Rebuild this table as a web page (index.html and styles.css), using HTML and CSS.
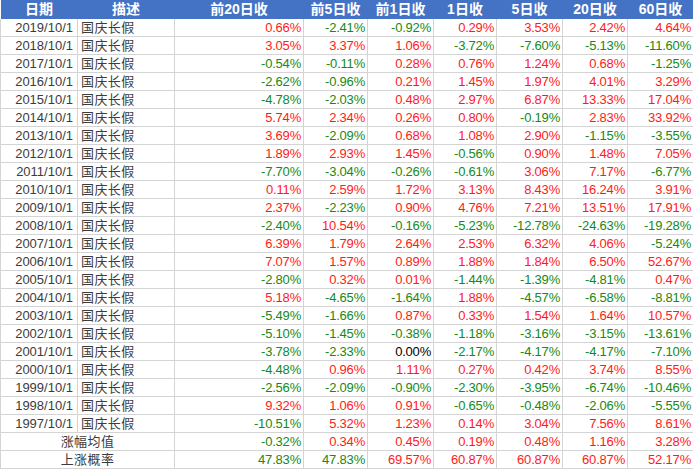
FILE: index.html
```html
<!DOCTYPE html>
<html lang="zh">
<head>
<meta charset="utf-8">
<title>国庆长假</title>
<link rel="stylesheet" href="styles.css">
</head>
<body>
<table class="tbl">
<colgroup>
<col class="c-date"><col class="c-desc"><col class="c-n20"><col class="c-n5"><col class="c-n1"><col class="c-d1"><col class="c-d5"><col class="c-d20"><col class="c-d60">
</colgroup>
<thead>
<tr><th>日期</th><th>描述</th><th>前20日收</th><th>前5日收</th><th>前1日收</th><th>1日收</th><th>5日收</th><th>20日收</th><th>60日收</th></tr>
</thead>
<tbody>
<tr class="first"><td class="date">2019/10/1</td><td class="desc">国庆长假</td><td class="up">0.66%</td><td class="dn">-2.41%</td><td class="dn">-0.92%</td><td class="up">0.29%</td><td class="up">3.53%</td><td class="up">2.42%</td><td class="up">4.64%</td></tr>
<tr><td class="date">2018/10/1</td><td class="desc">国庆长假</td><td class="up">3.05%</td><td class="up">3.37%</td><td class="up">1.06%</td><td class="dn">-3.72%</td><td class="dn">-7.60%</td><td class="dn">-5.13%</td><td class="dn">-11.60%</td></tr>
<tr><td class="date">2017/10/1</td><td class="desc">国庆长假</td><td class="dn">-0.54%</td><td class="dn">-0.11%</td><td class="up">0.28%</td><td class="up">0.76%</td><td class="up">1.24%</td><td class="up">0.68%</td><td class="dn">-1.25%</td></tr>
<tr><td class="date">2016/10/1</td><td class="desc">国庆长假</td><td class="dn">-2.62%</td><td class="dn">-0.96%</td><td class="up">0.21%</td><td class="up">1.45%</td><td class="up">1.97%</td><td class="up">4.01%</td><td class="up">3.29%</td></tr>
<tr><td class="date">2015/10/1</td><td class="desc">国庆长假</td><td class="dn">-4.78%</td><td class="dn">-2.03%</td><td class="up">0.48%</td><td class="up">2.97%</td><td class="up">6.87%</td><td class="up">13.33%</td><td class="up">17.04%</td></tr>
<tr><td class="date">2014/10/1</td><td class="desc">国庆长假</td><td class="up">5.74%</td><td class="up">2.34%</td><td class="up">0.26%</td><td class="up">0.80%</td><td class="dn">-0.19%</td><td class="up">2.83%</td><td class="up">33.92%</td></tr>
<tr><td class="date">2013/10/1</td><td class="desc">国庆长假</td><td class="up">3.69%</td><td class="dn">-2.09%</td><td class="up">0.68%</td><td class="up">1.08%</td><td class="up">2.90%</td><td class="dn">-1.15%</td><td class="dn">-3.55%</td></tr>
<tr><td class="date">2012/10/1</td><td class="desc">国庆长假</td><td class="up">1.89%</td><td class="up">2.93%</td><td class="up">1.45%</td><td class="dn">-0.56%</td><td class="up">0.90%</td><td class="up">1.48%</td><td class="up">7.05%</td></tr>
<tr><td class="date">2011/10/1</td><td class="desc">国庆长假</td><td class="dn">-7.70%</td><td class="dn">-3.04%</td><td class="dn">-0.26%</td><td class="dn">-0.61%</td><td class="up">3.06%</td><td class="up">7.17%</td><td class="dn">-6.77%</td></tr>
<tr><td class="date">2010/10/1</td><td class="desc">国庆长假</td><td class="up">0.11%</td><td class="up">2.59%</td><td class="up">1.72%</td><td class="up">3.13%</td><td class="up">8.43%</td><td class="up">16.24%</td><td class="up">3.91%</td></tr>
<tr><td class="date">2009/10/1</td><td class="desc">国庆长假</td><td class="up">2.37%</td><td class="dn">-2.23%</td><td class="up">0.90%</td><td class="up">4.76%</td><td class="up">7.21%</td><td class="up">13.51%</td><td class="up">17.91%</td></tr>
<tr><td class="date">2008/10/1</td><td class="desc">国庆长假</td><td class="dn">-2.40%</td><td class="up">10.54%</td><td class="dn">-0.16%</td><td class="dn">-5.23%</td><td class="dn">-12.78%</td><td class="dn">-24.63%</td><td class="dn">-19.28%</td></tr>
<tr><td class="date">2007/10/1</td><td class="desc">国庆长假</td><td class="up">6.39%</td><td class="up">1.79%</td><td class="up">2.64%</td><td class="up">2.53%</td><td class="up">6.32%</td><td class="up">4.06%</td><td class="dn">-5.24%</td></tr>
<tr><td class="date">2006/10/1</td><td class="desc">国庆长假</td><td class="up">7.07%</td><td class="up">1.57%</td><td class="up">0.89%</td><td class="up">1.88%</td><td class="up">1.84%</td><td class="up">6.50%</td><td class="up">52.67%</td></tr>
<tr><td class="date">2005/10/1</td><td class="desc">国庆长假</td><td class="dn">-2.80%</td><td class="up">0.32%</td><td class="up">0.01%</td><td class="dn">-1.44%</td><td class="dn">-1.39%</td><td class="dn">-4.81%</td><td class="up">0.47%</td></tr>
<tr><td class="date">2004/10/1</td><td class="desc">国庆长假</td><td class="up">5.18%</td><td class="dn">-4.65%</td><td class="dn">-1.64%</td><td class="up">1.88%</td><td class="dn">-4.57%</td><td class="dn">-6.58%</td><td class="dn">-8.81%</td></tr>
<tr><td class="date">2003/10/1</td><td class="desc">国庆长假</td><td class="dn">-5.49%</td><td class="dn">-1.66%</td><td class="up">0.87%</td><td class="up">0.33%</td><td class="up">1.54%</td><td class="up">1.64%</td><td class="up">10.57%</td></tr>
<tr><td class="date">2002/10/1</td><td class="desc">国庆长假</td><td class="dn">-5.10%</td><td class="dn">-1.45%</td><td class="dn">-0.38%</td><td class="dn">-1.18%</td><td class="dn">-3.16%</td><td class="dn">-3.15%</td><td class="dn">-13.61%</td></tr>
<tr><td class="date">2001/10/1</td><td class="desc">国庆长假</td><td class="dn">-3.78%</td><td class="dn">-2.33%</td><td class="zero">0.00%</td><td class="dn">-2.17%</td><td class="dn">-4.17%</td><td class="dn">-4.17%</td><td class="dn">-7.10%</td></tr>
<tr><td class="date">2000/10/1</td><td class="desc">国庆长假</td><td class="dn">-4.48%</td><td class="up">0.96%</td><td class="up">1.11%</td><td class="up">0.27%</td><td class="up">0.42%</td><td class="up">3.74%</td><td class="up">8.55%</td></tr>
<tr><td class="date">1999/10/1</td><td class="desc">国庆长假</td><td class="dn">-2.56%</td><td class="dn">-2.09%</td><td class="dn">-0.90%</td><td class="dn">-2.30%</td><td class="dn">-3.95%</td><td class="dn">-6.74%</td><td class="dn">-10.46%</td></tr>
<tr><td class="date">1998/10/1</td><td class="desc">国庆长假</td><td class="up">9.32%</td><td class="up">1.06%</td><td class="up">0.91%</td><td class="dn">-0.65%</td><td class="dn">-0.48%</td><td class="dn">-2.06%</td><td class="dn">-5.55%</td></tr>
<tr><td class="date">1997/10/1</td><td class="desc">国庆长假</td><td class="dn">-10.51%</td><td class="up">5.32%</td><td class="up">1.23%</td><td class="up">0.14%</td><td class="up">3.04%</td><td class="up">7.56%</td><td class="up">8.61%</td></tr>
<tr><td class="label" colspan="2">涨幅均值</td><td class="dn">-0.32%</td><td class="up">0.34%</td><td class="up">0.45%</td><td class="up">0.19%</td><td class="up">0.48%</td><td class="up">1.16%</td><td class="up">3.28%</td></tr>
<tr><td class="label" colspan="2">上涨概率</td><td class="dn">47.83%</td><td class="dn">47.83%</td><td class="up">69.57%</td><td class="up">60.87%</td><td class="up">60.87%</td><td class="up">60.87%</td><td class="up">52.17%</td></tr>
</tbody>
</table>
</body>
</html>
```
FILE: styles.css
```css
html, body {
  margin: 0;
  padding: 0;
  background: #ffffff;
}

.tbl {
  width: 693px;
  table-layout: fixed;
  border-collapse: collapse;
  font-family: "Liberation Sans", "Noto Sans CJK SC", sans-serif;
  font-size: 13px;
}

.c-date { width: 77px; }
.c-desc { width: 97px; }
.c-n20 { width: 129px; }
.c-n5 { width: 64px; }
.c-n1 { width: 66px; }
.c-d1 { width: 63px; }
.c-d5 { width: 66px; }
.c-d20 { width: 65px; }
.c-d60 { width: 66px; }

.tbl th {
  background: #4472c4;
  color: #ffffff;
  font-weight: bold;
  font-size: 14px;
  height: 19px;
  line-height: 19px;
  padding: 0;
  text-align: center;
  border: none;
  white-space: nowrap;
}

.tbl td {
  height: 17px;
  line-height: 17px;
  padding: 0 2px 0 2px;
  border: 1px solid #d4d4d4;
  text-align: right;
  white-space: nowrap;
  overflow: hidden;
  letter-spacing: -0.2px;
}

.tbl tr.first td {
  border-top-style: hidden;
}

.tbl td.date {
  color: #3c3c3c;
  padding-right: 4px;
  letter-spacing: 0;
}

.tbl td.desc {
  color: #3c3c3c;
  text-align: left;
  padding-left: 3px;
  letter-spacing: 0.4px;
}

.tbl td.label {
  color: #3c3c3c;
  text-align: center;
  letter-spacing: 0.4px;
}

.up { color: #ff1a1a; }
.dn { color: #158a15; }
.zero { color: #000000; }
```
